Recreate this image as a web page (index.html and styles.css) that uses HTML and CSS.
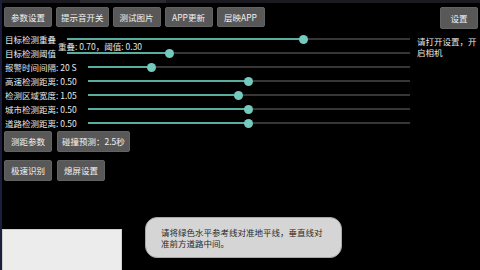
FILE: index.html
```html
<!DOCTYPE html>
<html lang="zh">

<head>
  <meta charset="UTF-8" />
  <meta name="viewport" content="width=device-width, initial-scale=1.0" />
  <title>检测设置</title>
  <link rel="stylesheet" href="styles.css">
</head>

<body>
  <div class="status-strip"><span class="status-mark"></span></div>

  <div class="toolbar">
    <button class="btn">参数设置</button>
    <button class="btn">提示音开关</button>
    <button class="btn">测试图片</button>
    <button class="btn">APP更新</button>
    <button class="btn">层映APP</button>
    <button class="btn btn-settings">设置</button>
  </div>

  <div class="main">
    <div class="sliders">
      <div class="slider-row">
        <span class="label">目标检测重叠</span>
        <div class="track"><div class="fill" style="width:69%"><span class="thumb"></span></div></div>
      </div>
      <div class="slider-row">
        <span class="label">目标检测阈值</span>
        <div class="track"><div class="fill" style="width:30%"><span class="thumb"></span></div></div>
      </div>
      <div class="slider-row wide">
        <span class="label">报警时间间隔: 20 S</span>
        <div class="track"><div class="fill" style="width:20%"><span class="thumb"></span></div></div>
      </div>
      <div class="slider-row wide">
        <span class="label">高速检测距离: 0.50</span>
        <div class="track"><div class="fill" style="width:50%"><span class="thumb"></span></div></div>
      </div>
      <div class="slider-row wide">
        <span class="label">检测区域宽度: 1.05</span>
        <div class="track"><div class="fill" style="width:47%"><span class="thumb"></span></div></div>
      </div>
      <div class="slider-row wide">
        <span class="label">城市检测距离: 0.50</span>
        <div class="track"><div class="fill" style="width:50%"><span class="thumb"></span></div></div>
      </div>
      <div class="slider-row wide">
        <span class="label">道路检测距离: 0.50</span>
        <div class="track"><div class="fill" style="width:50%"><span class="thumb"></span></div></div>
      </div>
      <div class="overlap-value">重叠: 0.70，阈值: 0.30</div>
    </div>
    <p class="camera-hint">请打开设置，开启相机</p>
  </div>

  <div class="actions">
    <div class="btn-row">
      <button class="btn">测距参数</button>
      <button class="btn">碰撞预测：2.5秒</button>
    </div>
    <div class="btn-row">
      <button class="btn">极速识别</button>
      <button class="btn">熄屏设置</button>
    </div>
  </div>

  <div class="preview"></div>

  <div class="toast">请将绿色水平参考线对准地平线，垂直线对准前方道路中间。</div>
</body>

</html>
```

FILE: styles.css
```css
body {
  margin: 0;
  width: 478px;
  height: 270px;
  overflow: hidden;
  position: relative;
  background: #000;
  border-left: 2px solid #1c1c3c;
  font-family: 'Noto Sans CJK SC', 'Noto Sans', sans-serif;
  color: #e6e6e6;
}

.status-strip {
  height: 3px;
  background: #1a1a20;
  display: flex;
}

.status-mark {
  margin-left: 78px;
  width: 86px;
  background: #2a2a30;
}

.btn {
  font-family: 'Noto Sans CJK SC', 'Noto Sans', sans-serif;
  font-size: 8.5px;
  color: #f2f2f2;
  background: #585858;
  border: 1px solid #636363;
  border-radius: 2px;
  min-width: 48px;
  height: 21px;
  padding: 0 4px;
  margin: 0;
  line-height: 19px;
  white-space: nowrap;
}

.toolbar {
  display: flex;
  gap: 4px;
  padding: 4px 2px 0 2px;
}

.toolbar .btn {
  height: 20px;
}

.toolbar .btn-settings {
  margin-left: auto;
  min-width: 38px;
  height: 22px;
}

.main {
  display: flex;
  gap: 7px;
  margin-top: 3px;
}

.sliders {
  position: relative;
  width: 408px;
}

.slider-row {
  display: flex;
  align-items: center;
  height: 14px;
  padding-left: 3px;
}

.label {
  width: 62px;
  font-size: 8.5px;
  white-space: nowrap;
  color: #e8e8e8;
}

.slider-row.wide .label {
  width: 83px;
}

.track {
  flex: 1;
  height: 2px;
  background: #363636;
  position: relative;
}

.fill {
  height: 100%;
  background: #5aae9f;
  position: relative;
}

.thumb {
  position: absolute;
  right: -4px;
  top: -3.5px;
  width: 9px;
  height: 9px;
  border-radius: 50%;
  background: #74cbbd;
}

.overlap-value {
  position: absolute;
  left: 56px;
  top: 8px;
  font-size: 8.5px;
  color: #e0e0e0;
  white-space: nowrap;
}

.camera-hint {
  margin: 4px 0 0 0;
  width: 60px;
  font-size: 8.5px;
  line-height: 11px;
  color: #e6e6e6;
}

.actions {
  display: flex;
  flex-direction: column;
  gap: 8px;
  padding-left: 2px;
  margin-top: 1px;
}

.btn-row {
  display: flex;
  gap: 5px;
}

.preview {
  margin-top: 48px;
  width: 118px;
  height: 42px;
  background: #ececec;
  border: 1px solid #d0d0d0;
}

.toast {
  position: absolute;
  left: 143px;
  top: 217px;
  width: 166px;
  padding: 9px 14px 8px 15px;
  background: #d5d5d5;
  border: 1px solid #a8a8a8;
  border-radius: 12px;
  font-size: 8.5px;
  line-height: 11px;
  color: #2a2a2a;
}
```
